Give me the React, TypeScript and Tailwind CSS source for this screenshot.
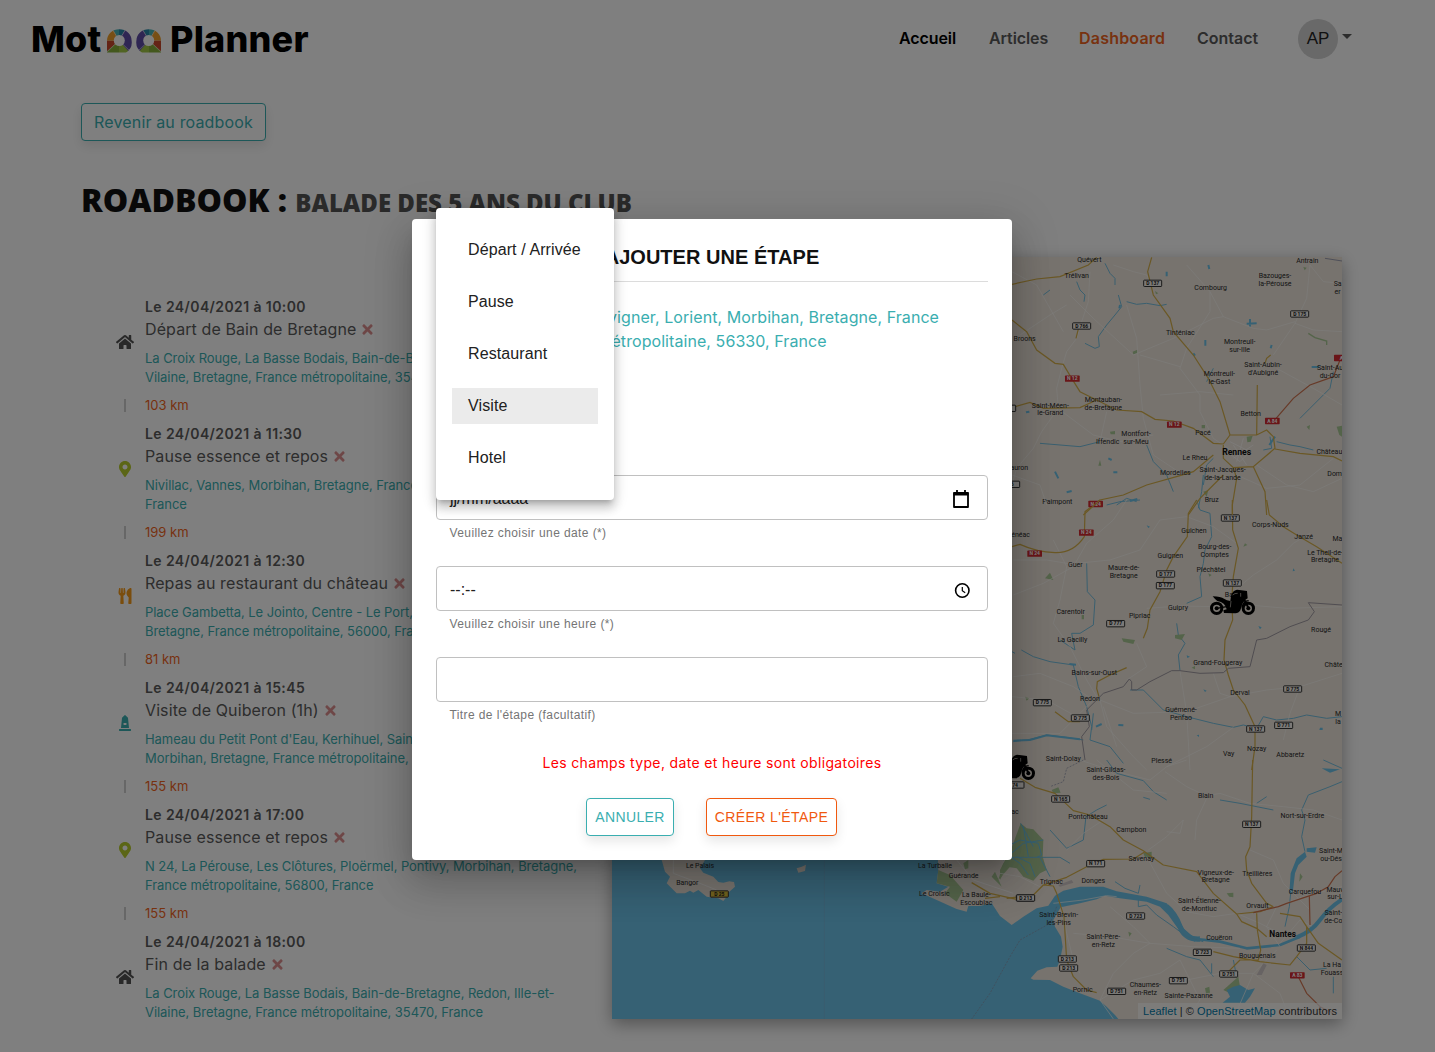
import React from "react";
import { FaHome, FaMapMarkerAlt, FaUtensils, FaTimes, FaMonument } from "react-icons/fa";

const steps = [
  { date: "Le 24/04/2021 à 10:00", title: "Départ de Bain de Bretagne", a: "La Croix Rouge, La Basse Bodais, Bain-de-Bretagne, Redon, Ille-et-", b: "Vilaine, Bretagne, France métropolitaine, 35470, France", icon: "home", km: "103 km" },
  { date: "Le 24/04/2021 à 11:30", title: "Pause essence et repos", a: "Nivillac, Vannes, Morbihan, Bretagne, France métropolitaine, 56130,", b: "France", icon: "pin", km: "199 km" },
  { date: "Le 24/04/2021 à 12:30", title: "Repas au restaurant du château", a: "Place Gambetta, Le Jointo, Centre - Le Port, Vannes, Morbihan,", b: "Bretagne, France métropolitaine, 56000, France", icon: "food", km: "81 km" },
  { date: "Le 24/04/2021 à 15:45", title: "Visite de Quiberon (1h)", a: "Hameau du Petit Pont d'Eau, Kerhihuel, Saint-Pierre-Quiberon,", b: "Morbihan, Bretagne, France métropolitaine, 56510, France", icon: "visit", km: "155 km" },
  { date: "Le 24/04/2021 à 17:00", title: "Pause essence et repos", a: "N 24, La Pérouse, Les Clôtures, Ploërmel, Pontivy, Morbihan, Bretagne,", b: "France métropolitaine, 56800, France", icon: "pin", km: "155 km" },
  { date: "Le 24/04/2021 à 18:00", title: "Fin de la balade", a: "La Croix Rouge, La Basse Bodais, Bain-de-Bretagne, Redon, Ille-et-", b: "Vilaine, Bretagne, France métropolitaine, 35470, France", icon: "home", km: "" },
];

function StepIcon({ kind }: { kind: string }) {
  if (kind === "home") return <FaHome size={18} className="text-[#535353]" />;
  if (kind === "pin") return <FaMapMarkerAlt size={16} className="text-[#b7cc2c]" />;
  if (kind === "food") return <FaUtensils size={16} className="text-[#f59a1b]" />;
  return <FaMonument size={16} className="text-[#3aaeb0]" />;
}

function Wheel() {
  return (
    <svg width="25" height="24" viewBox="0 0 25 24">
      <clipPath id="wheelShape"><path d="M0 23.5V11.5A12.3 11.3 0 0 1 24.6 11.5A12 12 0 0 1 19 23.5Z" /></clipPath>
      <g clipPath="url(#wheelShape)">
        <path d="M12 11.5L3-4H12Z" fill="#48b4b8" />
        <path d="M12 11.5V-4H21Z" fill="#2886a8" />
        <path d="M12 11.5L21-4L30 8V22L19 22Z" fill="#5f4ca6" />
        <path d="M12 11.5L24 25H12Z" fill="#a2c846" />
        <path d="M12 11.5V25H-3Z" fill="#86b03a" />
        <path d="M12 11.5L-3 25V11.5Z" fill="#c8492c" />
        <path d="M12 11.5H-3V4L4-3Z" fill="#ef9f2a" />
        <path d="M12 11.5L4-2M12 11.5L20-2M12 11.5L25 24M12 11.5L-1 24" stroke="#fff" strokeWidth=".5" />
      </g>
      <circle cx="12.3" cy="11.5" r="5.5" fill="#fff" />
    </svg>
  );
}

type Label = [number, number, string, string?];

function Labels({ items }: { items: Label[] }) {
  return (
    <g fontSize="21" fill="#2a2a2a" textAnchor="middle" stroke="none">
      {items.map(([x, y, t, u]) => (
        <text key={t + x + y} x={x} y={y + 7}>
          {t}
          {u && <tspan x={x} dy="23">{u}</tspan>}
        </text>
      ))}
    </g>
  );
}

function Shields({ items }: { items: Label[] }) {
  return (
    <g fontSize="15" fontWeight="700" textAnchor="middle">
      {items.map(([x, y, t, kind]) => (
        <g key={t + x + y}>
          <rect
            x={x - (kind === "red" ? 22 : 27)} y={y - 9.5} width={kind === "red" ? 44 : 54} height="19" rx="2"
            fill={kind === "red" ? "#d42a30" : kind === "yellow" ? "#e4c43c" : "#f6f3ee"}
            stroke={kind === "red" ? "none" : "#333"} strokeWidth="3"
          />
          <text x={x} y={y + 5.5} fill={kind === "red" ? "#fff" : "#222"}>{t}</text>
        </g>
      ))}
    </g>
  );
}

function Motorbike({ at }: { at: string }) {
  return (
    <g transform={at}>
      <g fill="none" stroke="#000">
        <circle cx="650" cy="325" r="15.5" strokeWidth="9" />
        <circle cx="745" cy="325" r="15.5" strokeWidth="9" />
        <path d="M731 295L746 325" strokeWidth="6" />
        <path d="M726 322Q730 303 746 302" strokeWidth="4" />
        <path d="M650 325L680 320" strokeWidth="4" />
      </g>
      <circle cx="650" cy="325" r="6" />
      <circle cx="745" cy="325" r="6" />
      <path d="M638 289Q663 290 672 296Q680 302 691 303L693 288Q697 272 711 269L724 271L741 273L743 295L735 300L727 312L721 331Q716 340 706 340L672 339L670 331L680 328Q676 307 652 303Q644 297 638 289Z" />
      <path d="M693 303L691 322M698 285Q704 279 713 280M722 279V290" fill="none" stroke="#eee6dc" strokeWidth="1.8" />
    </g>
  );
}

function RouteMap() {
  return (
    <svg className="block h-full w-full" viewBox="612 257 730 762" fontFamily="Roboto, sans-serif">
      <rect x="612" y="257" width="730" height="762" fill="#eee6dc" />

      <g transform="translate(1000 760) scale(.33333)" fill="none" strokeLinejoin="round">
        <path fill="#6cc3e8" d="M355 777L345 765L320 740L300 722L240 700L190 680L150 660L100 659L92 655L112 632L140 622L172 620L180 600L188 560L183 530L165 500L160 480L182 442L240 430L290 418L315 407L360 415L440 425L480 440L505 465L530 500L550 525L585 545L585 535L550 505L530 465L500 430L440 410L350 394L310 380L240 380L190 392L165 407L145 437L110 445L70 470L35 495L0 468L-25 430L-60 438L-95 438L-100 455L-130 447L-190 420L-235 400L-220 390L-180 395L-155 380L-190 370L-185 330L-190 200H-1200V800H355Z" />
        <path fill="#a9c894" d="M0 330L36 260L62 190L80 205L100 208L130 240L128 290L140 330L120 340L100 362L70 350L50 325L20 320L0 360ZM-185 330L-150 345L-110 390L-130 425L-165 400L-150 380L-190 370Z" />
        <path fill="#a9c894" d="M670 690L715 650L720 680L690 700ZM430 280L455 275L455 293L435 292ZM155 90L175 82L182 98L160 100ZM680 400L700 398L700 412L688 410ZM615 685L628 680L630 698L618 700ZM10 310L30 320L-5 360ZM385 515L395 520L388 530ZM900 340L908 350L898 365Z" />
        <path fill="#6cc3e8" d="M680 690L700 680L720 675L745 690L765 685L750 710L735 728H668L690 710ZM890 295L915 275L920 290L895 315L885 340L878 400H868L872 340ZM920 265L950 262L945 278L920 275ZM965 25L1020 28L990 38Z" />
        <path stroke="#6cc3e8" strokeWidth="3" d="M20 260L60 240L115 250L125 285L110 292M50 290L90 310L105 350M85 345L60 310L30 290M70 200L85 290M62 190L100 260M10 300L70 250L130 240M120 292L150 350" />
        <path stroke="#6cc3e8" strokeWidth="16" d="M500 440Q525 460 540 500T600 537" />
        <path stroke="#6cc3e8" strokeWidth="8" d="M590 537L660 545L740 565L840 555L900 530" />
        <path stroke="#6cc3e8" strokeWidth="12" d="M890 532Q935 515 960 480T1026 418" />
        <path stroke="#73bfdf" strokeWidth="3" d="M915 275L905 230L915 180L905 150L925 105L990 80L1026 65M872 400L868 440L855 500M415 420V440L440 435L470 465L520 500L560 530L610 545M345 365L375 385L415 400L420 375M320 0L350 40L430 62L460 95L500 120M500 565L560 590L600 600L640 650M635 610V640M430 112L450 118M700 600L710 650M660 120L720 130L820 150M770 130L800 110M890 590L930 630L980 625M1000 650V700M150 210L200 265L250 240M250 240L258 170L290 150L320 135M0 292H180L210 310" />
        <path stroke="#fbf9f5" strokeWidth="2.5" opacity=".8" d="M240 0L330 30L450 60L500 20L560 0M495 35L560 80L620 108L660 100L750 130L850 140L940 150L1026 180M620 115L590 180L585 240M550 180L500 230L445 270M550 180L540 220L500 215M160 430L250 420L320 407L350 410M290 0L350 50L400 90L500 100M185 440L200 520L220 600L240 640M220 520L330 530L450 550L580 560L720 565M450 550L400 500L330 440M300 720L340 640L400 580L450 550M340 777L300 720L400 660L480 640L540 600L560 640L600 720L560 777M840 560L800 500L830 440L910 410L1026 380M840 550L900 480L935 498M560 660L660 640L760 640L840 700L870 777M860 530L780 490L710 460L640 470L560 455L500 400L440 290M310 180L250 220L200 270M700 777L760 640L830 570M930 450L850 370L820 300L750 270M0 340L60 350L120 380" />
        <path stroke="#d6b04a" strokeWidth="3.6" d="M60 55L105 82L165 100L220 152L270 165L330 200L370 240L430 272L490 315L590 335L640 400L710 462L780 455L820 440M758 0L755 170L750 260L737 290L740 330L755 370L800 430L820 440M20 415L100 405L130 375L200 352L260 320L310 298L400 297L435 275M130 375L160 378L170 400L192 470L200 600L220 650L260 690L290 698M710 462L725 485L770 505L800 530M770 460L772 510L782 570L775 600L720 600L680 640M640 575L700 590L780 605L870 615L890 590L920 550L920 500L900 470L840 460M920 500L955 550L1026 600M-45 415L0 410" />
        <path stroke="#cf7450" strokeWidth="3.6" d="M760 458L835 440L860 430L905 415L950 400L985 380L1005 350L1026 332M928 408L930 495M895 650L920 700L960 740L1000 760" />
        <path stroke="#8a8fa8" strokeWidth="2" d="M250 0L200 25L190 65L150 80M170 440L150 490L60 540L30 590L-30 700L-85 777" strokeDasharray="6 4" />
        <path fill="#cfc6c6" d="M770 645L790 610L800 615L785 645ZM175 375L215 360L220 368L180 380Z" />
        <Labels items={[[318, 30, "Saint-Gildas-", "des-Bois"], [617, 108, "Blain"], [907, 166, "Nort-sur-Erdre"], [264, 170, "Pontchâteau"], [394, 210, "Campbon"], [424, 297, "Savenay"], [647, 337, "Vigneux-de-", "Bretagne"], [772, 342, "Treillières"], [280, 362, "Donges"], [154, 364, "Trignac"], [915, 396, "Carquefou"], [1005, 388, "Mauv", "sur-L"], [993, 272, "Saint-M", "ou-Dés"], [598, 422, "Saint-Étienne-", "de-Montluc"], [772, 438, "Orvault"], [1000, 458, "Saint-", "de-Co"], [176, 465, "Saint-Brevin-", "les-Pins"], [658, 534, "Couëron"], [310, 530, "Saint-Père-", "en-Retz"], [772, 586, "Bouguenais"], [996, 614, "La Ha", "Fouass"], [248, 689, "Pornic"], [436, 674, "Chaumes-", "en-Retz"], [566, 708, "Sainte-Pazanne"], [45, 156, "ac"]]} />
        <text x="848" y="531" fontSize="25" fontWeight="700" textAnchor="middle" fill="#111">Nantes</text>
        <Shields items={[[45, 75, "74"], [182, 117, "N 165"], [755, 193, "N 137"], [287, 311, "N 171"], [76, 414, "D 213"], [407, 468, "D 723"], [607, 577, "D 723"], [919, 564, "N 844"], [202, 597, "D 213"], [206, 624, "D 213"], [686, 642, "D 751"], [535, 662, "D 751"], [350, 694, "D 751"], [892, 646, "A 83", "red"]]} />
      </g>

      <g transform="translate(590 840) scale(.33333)">
        <path fill="#eee6dc" d="M215 60H345L330 85L340 98L370 110L385 126L400 128L418 124L432 126L435 140L418 155L412 168L400 183L385 175L350 170L325 150L310 158L300 152L285 160L260 160L245 145L230 130L240 110L225 95ZM620 85L635 80L648 74L645 93L625 98Z" />
        <path fill="none" stroke="#fff" strokeWidth="2.5" opacity=".8" d="M250 60V100L330 130L380 150M1100 60L1150 120L1270 160" />
        <path fill="none" stroke="#d6b04a" strokeWidth="4" d="M1145 128L1200 160L1280 178" />
        <path fill="none" stroke="#8a9fc0" strokeWidth="1.5" opacity=".5" d="M703 60V537" />
        <path fill="#a9c894" d="M1205 110L1215 95L1235 140ZM1120 70L1135 60V85L1125 88Z" />
        <Labels items={[[330, 76, "Le Palais"], [292, 128, "Bangor"], [1035, 76, "La Turballe"], [1121, 106, "Guérande"], [1033, 162, "Le Croisic"], [1159, 165, "La Baule-", "Escoublac"]]} />
        <Shields items={[[388, 162, "D 25", "yellow"], [1307, 174, "D 213"]]} />
      </g>

      <g transform="translate(1000 500) scale(.33333)" fill="none">
        <path stroke="#73bfdf" strokeWidth="3" d="M320 15L360 5L420 0M590 0L600 30L630 40L635 110L615 150L610 190L600 230L605 290L560 310M260 190L262 275L285 300L280 375L240 400L215 400L225 450L180 420M530 370L535 405L555 430L535 465L540 512M64 450L100 470L150 485L220 495L235 560L260 620L275 680L270 720L330 740L370 790M390 570L430 570L490 630L560 650L640 670L700 682L730 675L770 685L790 650L830 660L880 655L920 645L980 655L1026 650M40 725L90 718L140 705L200 712L250 720M45 460L36 455M970 780L1026 805M280 640L275 690" />
        <path stroke="#6cc3e8" strokeWidth="6" d="M40 722L90 720L140 706L190 712L240 718M208 492L228 494M288 680L305 672M355 675L370 676" />
        <path fill="#a9c894" d="M135 235L150 218L160 240ZM365 415L405 420L400 432L370 425ZM525 405L555 402L545 420L525 415ZM575 503L585 498V508ZM245 345H252V358H245ZM75 590L88 595L80 602ZM625 220L635 225L628 230ZM735 130L742 135L730 140Z" />
        <path fill="#6cc3e8" d="M440 76L450 80L445 84ZM775 378L785 382L780 388ZM880 205L885 212L878 214ZM960 683H968V690H958ZM610 568L620 572L615 576ZM560 466L570 470L562 474ZM590 706L597 704V711Z" />
        <path stroke="#fbf9f5" strokeWidth="2.5" opacity=".8" d="M40 285L130 250L220 200L260 130L340 60L380 0M230 190L330 180L420 150L480 60L560 50M160 120L200 200L180 300L160 370L210 440L260 540L290 590M440 325L540 318L640 320L690 310L860 325L1026 320M700 275L760 225L830 180L880 130L930 100M560 50L640 80L710 130M300 600L400 640L560 635L690 590L800 570L900 560L1026 520M300 600L320 680L400 770L440 810M280 600L180 700L36 700M410 430L440 500L380 540M540 512L560 640L570 810M900 560L870 640L850 720M640 520L660 580L690 590M700 682L620 740L500 800M40 530L120 520L220 560L280 600M36 590L140 600L230 650M310 620L350 740M40 180L140 180L230 195" />
        <path stroke="#d6b04a" strokeWidth="3.6" d="M300 0L255 35L253 110Q220 160 165 158T60 133L36 140M590 0L565 40L562 110L520 170L500 210L480 275L450 330L442 385L430 415M697 0L698 90L715 145L700 230L695 300L698 360L675 420L672 480L685 525L700 570L735 615L765 680V740L755 810M800 0L808 45L850 80L890 105L950 140L1026 190M380 503L330 525L292 545L290 565L297 590M165 635L205 665L240 665" />
        <path stroke="#a09aa2" strokeWidth="3" d="M925 308L1026 315M925 308L943 335L925 360L870 380L800 415L770 420L750 500L685 505L670 518L600 520L540 512L515 512L450 545L410 570L395 570V545L388 537L370 560L310 580L260 630L268 680L245 710L255 780" />
        <Labels items={[[172, 6, "Paimpont"], [811, 74, "Corps-Nuds"], [582, 92, "Guichen"], [911, 110, "Janzé"], [1012, 116, "Ma"], [62, 104, "énéac"], [644, 140, "Bourg-des-", "Comptes"], [511, 166, "Guignen"], [975, 157, "Le Theil-de-", "Bretagne"], [226, 194, "Guer"], [371, 203, "Maure-de-", "Bretagne"], [633, 208, "Pléchâtel"], [695, 284, "Bain"], [534, 322, "Guipry"], [212, 335, "Carentoir"], [419, 348, "Pipriac"], [963, 390, "Rougé"], [217, 419, "La Gacilly"], [653, 488, "Grand-Fougeray"], [1001, 493, "Châte"], [283, 518, "Bains-sur-Oust"], [720, 578, "Derval"], [270, 595, "Redon"], [543, 629, "Guémené-", "Penfao"], [1014, 642, "M", "la"], [770, 745, "Nozay"], [686, 762, "Vay"], [871, 764, "Abbaretz"], [190, 776, "Saint-Dolay"], [485, 781, "Plessé"]]} />
        <Shields items={[[287, 12, "N 24", "red"], [259, 98, "N 24", "red"], [104, 161, "N 24", "red"], [691, 54, "N 137"], [497, 222, "D 177"], [496, 257, "D 177"], [697, 249, "N 137"], [347, 371, "D 777"], [127, 608, "D 775"], [241, 654, "D 775"], [878, 567, "D 775"], [851, 676, "D 771"], [767, 687, "N 137"]]} />
      </g>

      <g transform="translate(1000 245) scale(.33333)" fill="none">
        <path stroke="#73bfdf" strokeWidth="3" d="M315 55L330 85L345 100V120M230 110L240 135L255 150L252 170M150 135L130 150M355 150L365 185L345 210L320 240L295 275L298 305L285 310L255 295M380 170L410 178L440 175L480 182L500 178M440 600L460 650L500 690L520 740M610 690L605 740L595 790M640 640L620 660L610 720M810 575L815 610L790 615M830 590L870 600L900 605L940 615M1000 380L990 430L930 490L900 520M120 595L180 600L240 605L300 590M620 410L640 370M350 780L380 760L410 770" />
        <path stroke="#6cc3e8" strokeWidth="6" d="M625 60L628 72M750 222V245M740 236L770 235M360 180L358 190M616 285V302M580 325L585 332M500 80V94M325 640L335 645M340 682H352M200 742L215 738M165 680L175 700M935 366H958M78 502L88 500M815 300L812 310M390 768L412 762M808 600L825 575" />
        <path fill="#a9c894" d="M398 320L412 314V325L400 328ZM1010 545L1026 542V575L1018 570ZM740 575L758 572L752 590L742 592ZM300 645L304 662H295ZM910 66L920 68L914 76ZM605 540H615V550H605ZM330 560L345 558V568H332ZM610 740L625 735L620 755ZM920 545L930 540L928 555ZM465 138L475 145L468 148Z" />
        <path stroke="#a9c894" strokeWidth="4" d="M925 265L945 278L980 288V300" />
        <path stroke="#fbf9f5" strokeWidth="2.5" opacity=".8" d="M340 60L400 80L440 90L450 110M270 80L265 170L245 230L230 280L200 320L185 370L170 430L175 490L125 560L100 610L50 670L36 720M380 180L410 280L420 420L430 520L460 630L550 690M210 150L280 220L400 330L520 280L640 220L670 215L630 140L560 60M630 140V200L560 310L540 370L600 450M930 60L920 160L885 235L820 330M885 235L940 255L1026 260M670 215L760 250L800 255L885 230M930 60L970 110L1026 115M420 330L540 365M180 495L280 570L360 590L460 570M480 450L600 440L700 450M60 270L150 210L200 180M700 620L640 580L600 500V450M770 660L860 720L940 740L1026 700M800 730L900 720L1000 640M710 690L800 730M1026 480L940 430L830 370M36 80L110 120L190 260M36 690L120 720L140 780M300 590L320 500" />
        <path stroke="#d6b04a" strokeWidth="3.6" d="M36 118L110 102L180 95L265 60L290 37M455 37L443 80L460 150L510 220L520 260L580 330L625 400L660 470L690 570M36 225L80 260L110 315L165 355L190 358L215 400L240 440L290 465L350 495L425 500L465 523L520 528L580 550L640 595L670 597L690 570L770 570L800 555L820 575L825 610L760 665L700 668L670 640V600M36 488L90 472L130 490L240 488L290 465M250 810L300 765L370 750L440 720L540 692L580 680L640 630M770 570L772 420M795 355L800 340L812 330M825 612L900 625L1000 635L1026 648M700 668L710 700L697 780V810M760 665L795 740L800 810M670 690L600 760L565 810M238 240L228 280" />
        <path stroke="#cf7450" strokeWidth="3.6" d="M820 530L880 460L930 420L1000 395L1020 345" />
        <path stroke="#fbf9f5" strokeWidth="2.5" d="M690 590L750 620L720 650L680 620M700 600L740 660M730 580L710 650M760 600L700 640" />
        <path stroke="#8a8fa8" strokeWidth="2.5" d="M975 40L1026 48" />
        <Labels items={[[268, 45, "Quévert"], [230, 93, "Trélivan"], [922, 47, "Antrain"], [825, 93, "Bazouges-", "la-Pérouse"], [632, 129, "Combourg"], [1013, 117, "Sa", "er"], [541, 263, "Tinténiac"], [74, 282, "Broons"], [719, 290, "Montreuil-", "sur-Ille"], [789, 360, "Saint-Aubin-", "d'Aubigné"], [990, 368, "Saint-Au", "du-Cor"], [658, 387, "Montreuil-", "le-Gast"], [310, 464, "Montauban-", "de-Bretagne"], [151, 481, "Saint-Méen-", "le-Grand"], [752, 505, "Betton"], [408, 566, "Montfort-", "sur-Meu"], [323, 591, "Iffendic"], [609, 563, "Pacé"], [585, 637, "Le Rheu"], [988, 620, "Château"], [526, 682, "Mordelles"], [668, 674, "Saint-Jacques-", "de-la-Lande"], [1004, 686, "Dom"], [58, 667, "auron"], [635, 764, "Bruz"]]} />
        <text x="710" y="629" fontSize="26" fontWeight="700" textAnchor="middle" fill="#111">Rennes</text>
        <Shields items={[[458, 115, "D 137"], [899, 207, "D 175"], [245, 243, "D 766"], [217, 401, "N 12", "red"], [523, 539, "N 12", "red"], [817, 528, "A 84", "red"], [1024, 339, "A", "red"], [20, 490, "D"], [32, 718, "66"]]} />
      </g>
      <g fill="#000">
        <Motorbike at="translate(1000 500) scale(.33333)" />
        <Motorbike at="translate(780 665) scale(.33333)" />
      </g>
    </svg>
  );
}

const outline = "rounded border bg-white shadow-[0_5px_12px_rgba(0,0,0,0.1)]";

function Field({ value, helper, icon }: { value: string; helper: string; icon?: React.ReactNode }) {
  return (
    <div className="h-[91px]">
      <div className="flex h-[45px] items-center justify-between rounded border border-[#c0c0c0] pt-[2px] pr-[17px] pl-[13px] text-base text-[#212121]">
        <span className="pt-px">{value}</span>
        {icon}
      </div>
      <div className="mt-[3px] pl-[13.5px] text-[12px] leading-5 tracking-[0.4px] text-[#757575]">{helper}</div>
    </div>
  );
}

export default function App() {
  return (
    <div className="relative h-[1052px] w-[1435px] overflow-hidden bg-white font-['Inter',sans-serif] text-[#5a5a5a]">
      <header className="flex h-[78px] items-center justify-between pr-[83px] pl-[31px]">
        <div className="flex items-center text-[36px] leading-none font-extrabold text-black">
          <span className="w-[76px] tracking-[0.1px]">Mot</span>
          <span className="mt-1 flex w-[63px] gap-[4px]">
            <Wheel />
            <span className="-scale-x-100"><Wheel /></span>
          </span>
          <span className="tracking-[0.2px]">Planner</span>
        </div>
        <nav className="flex items-center text-base font-semibold">
          <span className="-mt-0.5 w-[90px] tracking-[-0.1px] text-black">Accueil</span>
          <span className="-mt-0.5 w-[90px] tracking-[-0.1px]">Articles</span>
          <span className="-mt-0.5 w-[118px] tracking-[0.2px] text-[#f0641e]">Dashboard</span>
          <span className="-mt-0.5 w-[101px]">Contact</span>
          <span className="flex size-10 items-center justify-center rounded-full bg-[#d2d2d2] font-['Liberation_Sans',sans-serif] text-[17px] font-normal text-[#222]">AP</span>
          <span className="-mt-[6px] ml-1 h-0 w-0 border-x-5 border-t-5 border-x-transparent border-t-[#5a5a5a]" />
        </nav>
      </header>

      <main className="px-[81px] pt-[25px]">
        <button className={`${outline} h-[38px] w-[185px] border-[#3aaeb0] pb-px text-base tracking-[0.15px] text-[#3aaeb0]`}>Revenir au roadbook</button>
        <h1 className="mt-[34px] h-[50px] font-['Open_Sans',sans-serif] text-[32px] leading-[50px] font-extrabold whitespace-nowrap text-[#111]">
          ROADBOOK : <span className="text-2xl text-[#555]">BALADE DES 5 ANS DU CLUB</span>
        </h1>
        <div className="mt-[32px] flex">
          <section className="w-[531px] shrink-0 pt-[39px] whitespace-nowrap">
            {steps.map((s) => (
              <article key={s.date} className="h-[127px]">
                <div className="flex h-[91px]">
                  <div className="flex w-[88px] shrink-0 items-center justify-center"><StepIcon kind={s.icon} /></div>
                  <div className="-ml-6">
                    <div className="h-[21px] text-[14px] leading-[22px] font-semibold tracking-[0.4px]">{s.date}</div>
                    <div className="flex h-6 items-center text-base tracking-[0.1px]">
                      {s.title}
                      <FaTimes size={15} className="mt-px ml-1 text-[#dc8f8f]" />
                    </div>
                    <div className="mt-[8px] text-[13px] leading-[19px] tracking-[-0.06px] text-[#3aaeb0]">
                      <div>{s.a}</div>
                      <div>{s.b}</div>
                    </div>
                  </div>
                </div>
                {s.km && (
                  <div className="mt-[9px] flex h-[19px] items-center">
                    <div className="ml-[43px] h-[13px] w-[2px] bg-[#cfcfcf]" />
                    <div className="ml-[19px] text-[13px] text-[#f0641e]">{s.km}</div>
                  </div>
                )}
              </article>
            ))}
          </section>
          <section className="h-[762px] w-[730px] shrink-0 shadow-[0_5px_16px_rgba(0,0,0,0.35)]">
            <RouteMap />
            <div className="relative -mt-[16px] ml-auto h-4 w-[204px] bg-white/70 pl-[5px] font-['Liberation_Sans',sans-serif] text-[11px] leading-4 tracking-[0.07px] whitespace-nowrap text-[#333]">
              <span className="text-[#0078a8]">Leaflet</span> | © <span className="text-[#0078a8]">OpenStreetMap</span> contributors
            </div>
          </section>
        </div>
      </main>

      <div className="absolute inset-0 bg-black/50 font-['Liberation_Sans',sans-serif]">
        <div role="dialog" className="mt-[219px] ml-[412px] flex h-[641px] w-[600px] flex-col rounded bg-white px-6 pt-[23px] shadow-[0_11px_15px_-7px_rgba(0,0,0,0.2),0_24px_38px_3px_rgba(0,0,0,0.14),0_9px_46px_8px_rgba(0,0,0,0.12)]">
          <h2 className="h-[40px] border-b border-[#dcdcdc] text-center text-[20px] leading-[30px] font-bold tracking-[0.03px] text-[#111]">AJOUTER UNE ÉTAPE</h2>
          <p className="mt-[23px] text-center font-['Inter',sans-serif] text-base leading-6 tracking-[0.07px] text-[#3aaeb0]">
            Le Kerdavid, Pluvigner, Lorient, Morbihan, Bretagne, France<br />métropolitaine, 56330, France
          </p>
          <div className="mt-[122px]">
            <Field value="jj/mm/aaaa" helper="Veuillez choisir une date (*)" icon={
              <svg width="18" height="20" viewBox="0 0 18 20" fill="none" stroke="#000" strokeWidth="1.8"><path d="M2 4H16V18H2Z" strokeLinejoin="round" /><path d="M1.5 5H16.5" strokeWidth="3" /><path d="M5 1V5M13 1V5" /></svg>
            } />
            <Field value="--:--" helper="Veuillez choisir une heure (*)" icon={
              <svg width="16" height="18" viewBox="0 0 16 18" fill="none" stroke="#000"><circle cx="8.3" cy="9.5" r="6.7" strokeWidth="1.6" /><path d="M8.3 6V9.8L11.2 11.7" strokeWidth="1.2" /></svg>
            } />
            <Field value="" helper="Titre de l'étape (facultatif)" />
          </div>
          <p className="mt-[5px] text-center font-['Inter',sans-serif] text-[14px] leading-5 tracking-[0.35px] text-[#f00]">Les champs type, date et heure sont obligatoires</p>
          <div className="mt-[25px] flex justify-center gap-8 pr-px text-[14px] tracking-[0.4px]">
            <button className={`${outline} h-[38px] w-[88px] border-[#3aaeb0] text-[#3aaeb0]`}>ANNULER</button>
            <button className={`${outline} h-[38px] w-[131px] border-[#f0590f] text-[#f0590f]`}>CRÉER L'ÉTAPE</button>
          </div>
        </div>

        <ul role="listbox" className="absolute top-[208px] left-[436px] flex h-[292px] w-[178px] flex-col gap-4 rounded bg-white px-4 pt-6 text-base tracking-[0.1px] text-[#212121] shadow-[0_5px_5px_-3px_rgba(0,0,0,0.2),0_8px_10px_1px_rgba(0,0,0,0.14),0_3px_14px_2px_rgba(0,0,0,0.12)]">
          <li className="h-9 pl-4 leading-9">Départ / Arrivée</li>
          <li className="h-9 pl-4 leading-9">Pause</li>
          <li className="h-9 pl-4 leading-9">Restaurant</li>
          <li className="h-9 bg-[#ebebeb] pl-4 leading-9">Visite</li>
          <li className="h-9 pl-4 leading-9">Hotel</li>
        </ul>
      </div>
    </div>
  );
}
